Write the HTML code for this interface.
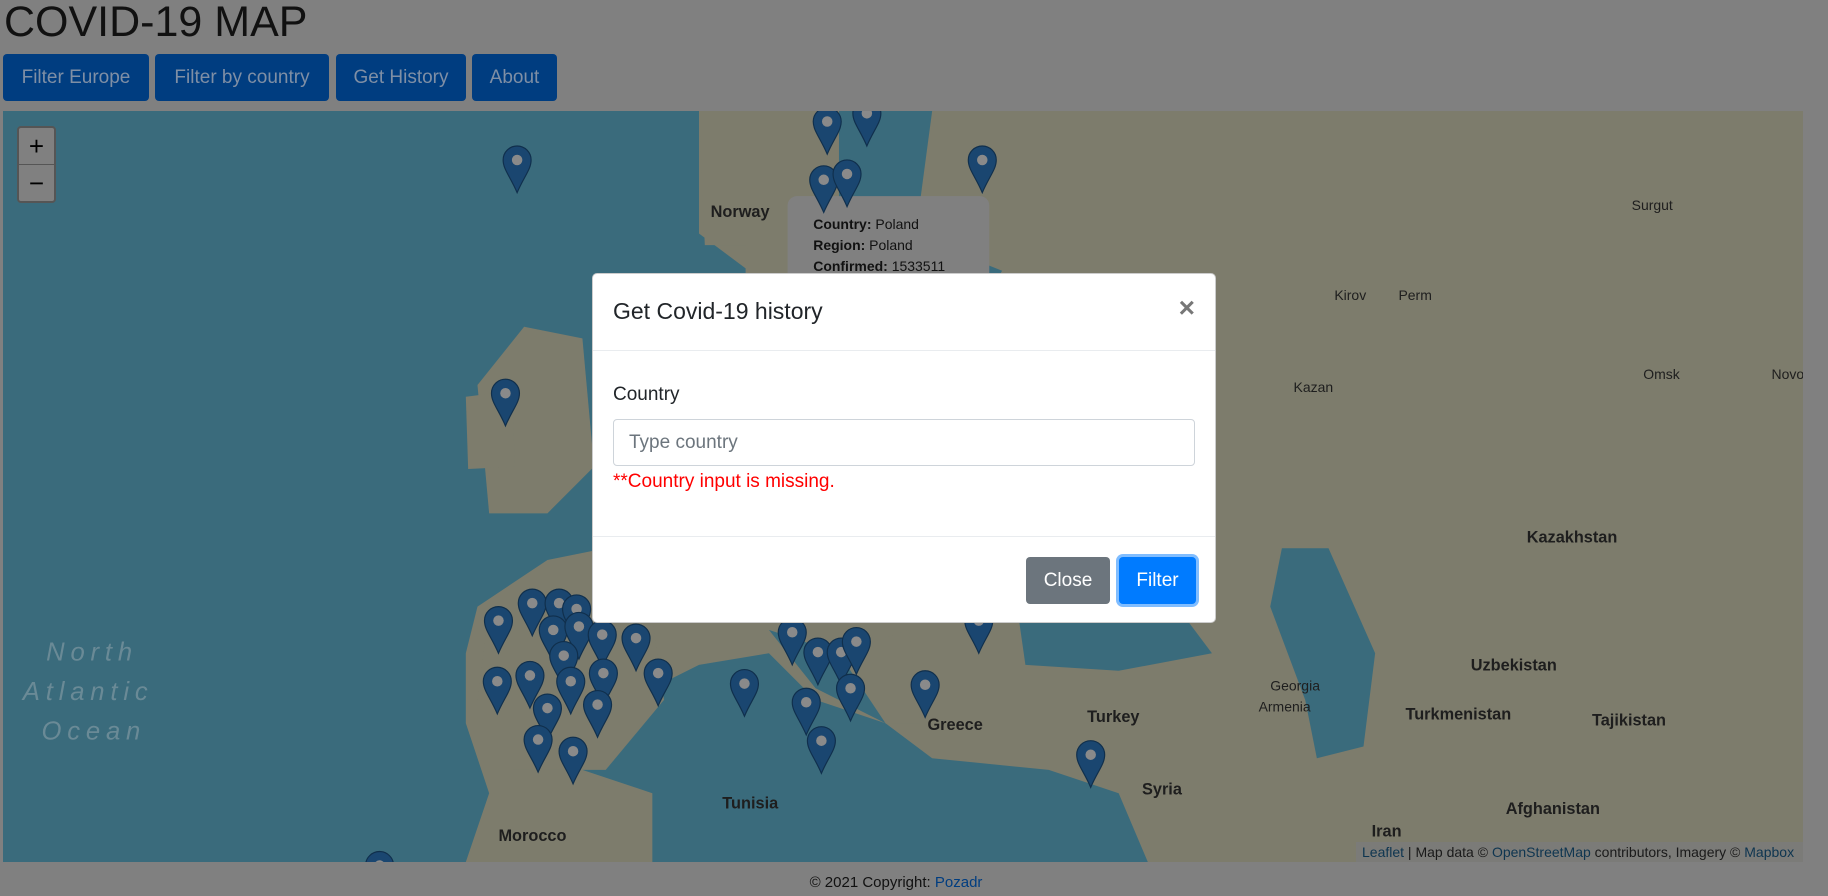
<!DOCTYPE html>
<html><head><meta charset="utf-8"><style>
*{box-sizing:border-box;margin:0;padding:0}
body{width:1828px;height:896px;overflow:hidden;background:#808080;font-family:"Liberation Sans",sans-serif;position:relative}
h1{position:absolute;left:4px;top:-2px;font-size:43px;font-weight:400;color:#111}
.btn{position:absolute;top:54px;height:47px;background:#003d80;color:#7f8fa5;font-size:19px;line-height:47px;text-align:center;border-radius:4px}
.map{position:absolute;left:3px;top:111px;width:1800px;height:751px}
.foot{position:absolute;top:874px;left:-18px;width:1828px;text-align:center;font-size:15px;color:#111}
.foot span{color:#003d80}
.zoom{position:absolute;left:17px;top:126px;width:39px;height:77px;background:#808080;border:2px solid #555;border-radius:4px;font-size:26px;color:#000;text-align:center}
.zoom div{height:37px;line-height:37px}
.attr{position:absolute;left:1356px;top:842px;width:447px;height:20px;background:#7b7b78;font-size:14px;color:#1a1a1a;line-height:20px;padding-left:6px}
.attr span{color:#0e3550}
.modal{position:absolute;left:592px;top:273px;width:624px;height:350px;background:#fff;border-radius:5px;border:1px solid rgba(0,0,0,.2)}
.mh{height:77px;border-bottom:1px solid #e9ecef;position:relative}
.mh h5{position:absolute;left:20px;top:24px;font-size:23px;font-weight:400;color:#212529}
.x{position:absolute;right:20px;top:18px;font-size:28px;font-weight:700;color:#777}
.lab{position:absolute;left:20px;top:110px;font-size:19px;color:#212529}
.inp{position:absolute;left:20px;top:145px;width:582px;height:47px;border:1px solid #ced4da;border-radius:4px;font-size:19px;color:#6c757d;line-height:45px;padding-left:15px}
.err{position:absolute;left:20px;top:197px;font-size:19px;color:#f00}
.mf{position:absolute;left:0;top:262px;width:622px;border-top:1px solid #e9ecef}
.b2{position:absolute;top:283px;height:47px;line-height:47px;color:#fff;font-size:19px;text-align:center;border-radius:4px}
</style></head><body>
<h1>COVID-19 MAP</h1>
<div class="btn" style="left:3px;width:146px">Filter Europe</div>
<div class="btn" style="left:155px;width:174px">Filter by country</div>
<div class="btn" style="left:336px;width:130px">Get History</div>
<div class="btn" style="left:472px;width:85px">About</div>
<svg class="map" viewBox="3 95 1544 644" preserveAspectRatio="none">
<rect x="3" y="95" width="1544" height="644" fill="#7d7c6c"/>
<g fill="#3a6b7c">
<polygon points="3,95 600,95 600,200 640,230 640,290 600,330 560,400 540,440 520,470 470,480 440,500 410,520 400,560 400,620 420,680 400,739 3,739"/>
<polygon points="720,95 800,95 790,170 760,200 720,175"/>
<polygon points="700,250 760,200 830,220 860,232 820,300 740,300 700,285"/>
<polygon points="520,610 600,570 660,560 700,600 760,620 800,650 900,660 960,680 985,739 560,739 560,680 500,660"/>
<polygon points="660,540 720,560 770,600 760,620 700,590"/>
<polygon points="870,500 950,480 1010,520 1040,560 960,575 880,570"/>
<polygon points="1100,470 1140,470 1180,560 1170,640 1130,650 1120,600 1090,520"/>
</g>
<g fill="#7d7c6c">
<polygon points="410,330 450,280 500,290 510,400 470,440 420,440"/>
<polygon points="400,340 440,335 442,400 402,402"/>
<polygon points="600,95 720,95 720,175 700,250 660,240 640,210 605,210"/>
<polygon points="420,520 560,530 570,600 520,660 440,660 410,600"/>
<polygon points="720,560 780,540 790,620 760,620"/>
</g>
<g font-family="Liberation Sans,sans-serif" font-weight="700" fill="#1e1e1e" font-size="14">
<text x="610" y="186">Norway</text><text x="1310" y="465">Kazakhstan</text><text x="1262" y="575">Uzbekistan</text>
<text x="1206" y="617">Turkmenistan</text><text x="1366" y="622">Tajikistan</text><text x="1292" y="698">Afghanistan</text>
<text x="933" y="619">Turkey</text><text x="796" y="626">Greece</text><text x="620" y="693">Tunisia</text>
<text x="428" y="721">Morocco</text><text x="980" y="681">Syria</text><text x="1177" y="717">Iran</text>
<text x="1090" y="592" font-size="12" font-weight="400">Georgia</text><text x="1145" y="257" font-size="12" font-weight="400">Kirov</text>
<text x="1200" y="257" font-size="12" font-weight="400">Perm</text><text x="1110" y="336" font-size="12" font-weight="400">Kazan</text>
<text x="1400" y="180" font-size="12" font-weight="400">Surgut</text><text x="1520" y="325" font-size="12" font-weight="400">Novosil</text>
<text x="1410" y="325" font-size="12" font-weight="400">Omsk</text><text x="1080" y="610" font-size="12" font-weight="400">Armenia</text>
</g>
<g font-family="Liberation Sans,sans-serif" font-style="italic" fill="#6a8a96" font-size="22" letter-spacing="5">
<text x="40" y="566">North</text><text x="20" y="600">Atlantic</text><text x="36" y="634">Ocean</text>
</g>
<rect x="676" y="168" width="173" height="75" rx="8" fill="#808080"/>
<g font-family="Liberation Sans,sans-serif" font-size="12" fill="#111"><text x="698" y="196"><tspan font-weight="700">Country:</tspan> Poland</text><text x="698" y="214"><tspan font-weight="700">Region:</tspan> Poland</text><text x="698" y="232"><tspan font-weight="700">Confirmed:</tspan> 1533511</text></g>
<defs><g id="m"><path d="M0,0 C-6,-14 -12,-20 -12,-28 A12,12 0 1 1 12,-28 C12,-20 6,-14 0,0Z" fill="#1a4670" stroke="#102f4c"/><circle cx="0" cy="-28" r="4.5" fill="#8a8a8a"/></g></defs>
<use href="#m" x="444" y="165"/><use href="#m" x="710" y="132"/><use href="#m" x="744" y="125"/><use href="#m" x="843" y="165"/>
<use href="#m" x="707" y="182"/><use href="#m" x="727" y="177"/><use href="#m" x="434" y="365"/><use href="#m" x="428" y="560"/>
<use href="#m" x="457" y="545"/><use href="#m" x="480" y="545"/><use href="#m" x="495" y="550"/><use href="#m" x="475" y="568"/>
<use href="#m" x="497" y="565"/><use href="#m" x="517" y="572"/><use href="#m" x="546" y="575"/><use href="#m" x="484" y="590"/>
<use href="#m" x="427" y="612"/><use href="#m" x="455" y="607"/><use href="#m" x="490" y="612"/><use href="#m" x="518" y="605"/>
<use href="#m" x="565" y="605"/><use href="#m" x="470" y="635"/><use href="#m" x="513" y="632"/><use href="#m" x="462" y="662"/>
<use href="#m" x="492" y="672"/><use href="#m" x="639" y="614"/><use href="#m" x="680" y="570"/><use href="#m" x="702" y="587"/>
<use href="#m" x="722" y="587"/><use href="#m" x="735" y="578"/><use href="#m" x="730" y="618"/><use href="#m" x="692" y="630"/>
<use href="#m" x="705" y="663"/><use href="#m" x="794" y="615"/><use href="#m" x="936" y="675"/><use href="#m" x="840" y="560"/>
<use href="#m" x="326" y="770"/>
</svg>
<div class="zoom"><div style="border-bottom:1px solid #555">+</div><div>−</div></div>
<div class="attr"><span>Leaflet</span> | Map data © <span>OpenStreetMap</span> contributors, Imagery © <span>Mapbox</span></div>
<div class="foot">© 2021 Copyright: <span>Pozadr</span></div>
<div class="modal">
<div class="mh"><h5>Get Covid-19 history</h5><div class="x">×</div></div>
<div class="lab">Country</div>
<div class="inp">Type country</div>
<div class="err">**Country input is missing.</div>
<div class="mf"></div>
<div class="b2" style="left:433px;width:84px;background:#6c757d">Close</div>
<div class="b2" style="left:526px;width:77px;background:#007bff;box-shadow:0 0 0 3px #80bdff">Filter</div>
</div>
</body></html>
